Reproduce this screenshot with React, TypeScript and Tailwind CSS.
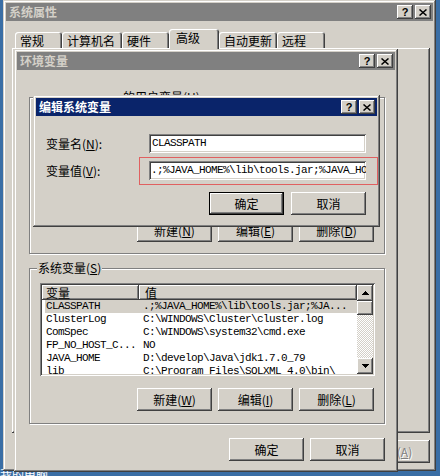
import React from 'react';

// classic 3D bevels
const RAISED_WIN =
  'shadow-[inset_-1px_-1px_#404040,inset_1px_1px_#d4d0c8,inset_-2px_-2px_#808080,inset_2px_2px_#ffffff]';
const RAISED =
  'shadow-[inset_-1px_-1px_#404040,inset_1px_1px_#ffffff,inset_-2px_-2px_#808080,inset_2px_2px_#d4d0c8]';
const SUNKEN =
  'shadow-[inset_1px_1px_#808080,inset_-1px_-1px_#ffffff,inset_2px_2px_#404040,inset_-2px_-2px_#d4d0c8]';
const HEADER = 'shadow-[inset_-1px_-1px_#404040,inset_1px_1px_#ffffff,inset_-2px_-2px_#808080]';
const MONO = "font-['Liberation_Mono','Noto_Sans_CJK_SC',monospace] text-[11px] tracking-[-0.6px]";

const M = ({ k }: { k: string }) => (
  <>
    (<span className="underline underline-offset-1">{k}</span>)
  </>
);

const CapBtn = ({ children }: { children: React.ReactNode }) => (
  <div className={`flex h-[14px] w-[16px] items-center justify-center bg-[#d4d0c8] ${RAISED}`}>{children}</div>
);

const TitleBar = ({ title, active }: { title: string; active?: boolean }) => (
  <div
    className={`flex h-[18px] shrink-0 items-center justify-between pl-[3px] pr-[2px] ${
      active ? 'bg-[#0a246a] text-white' : 'bg-[#808080] text-[#d4d0c8]'
    }`}
  >
    <span className="text-[12px] font-bold leading-none">{title}</span>
    <div className="flex gap-[2px]">
      <CapBtn>
        <span className="font-['Liberation_Sans',sans-serif] text-[11px] font-bold leading-none text-black">?</span>
      </CapBtn>
      <CapBtn>
        <svg width="8" height="7" viewBox="0 0 8 7">
          <path d="M0.5 0.5 L7.5 6.5 M7.5 0.5 L0.5 6.5" stroke="#000" strokeWidth="1.5" />
        </svg>
      </CapBtn>
    </div>
  </div>
);

const Btn = ({
  children,
  def,
  disabled,
}: {
  children: React.ReactNode;
  def?: boolean;
  disabled?: boolean;
}) => (
  <div
    className={`flex h-[23px] w-[75px] shrink-0 items-center justify-center bg-[#d4d0c8] text-[12px] leading-none ${
      def ? `border border-black ${RAISED}` : RAISED
    } ${disabled ? 'text-[#808080] [text-shadow:1px_1px_0_#ffffff]' : 'text-black'}`}
  >
    {children}
  </div>
);

const GroupBox = ({
  label,
  labelLeft,
  className = '',
  children,
}: {
  label: React.ReactNode;
  labelLeft: string;
  className?: string;
  children: React.ReactNode;
}) => (
  <div className={`relative border border-[#808080] shadow-[inset_1px_1px_#ffffff,1px_1px_#ffffff] ${className}`}>
    <span className={`absolute -top-[9px] ${labelLeft} bg-[#d4d0c8] px-[1px] text-[12px] leading-[16px]`}>{label}</span>
    {children}
  </div>
);

const rows = [
  ['CLASSPATH', '.;%JAVA_HOME%\\lib\\tools.jar;%JA...'],
  ['ClusterLog', 'C:\\WINDOWS\\Cluster\\cluster.log'],
  ['ComSpec', 'C:\\WINDOWS\\system32\\cmd.exe'],
  ['FP_NO_HOST_C...', 'NO'],
  ['JAVA_HOME', 'D:\\develop\\Java\\jdk1.7.0_79'],
  ['lib', 'C:\\Program Files\\SQLXML 4.0\\bin\\'],
];

const ListView = () => (
  <div className={`flex h-[93px] bg-white p-[2px] ${SUNKEN}`}>
    <div className="flex min-w-0 flex-1 flex-col overflow-hidden">
      <div className="flex h-[15px] shrink-0 bg-[#d4d0c8] text-[12px] leading-[15px]">
        <div className={`w-[97px] pl-[4px] ${HEADER}`}>变量</div>
        <div className={`flex-1 pl-[6px] ${HEADER}`}>值</div>
      </div>
      {rows.map(([name, value], i) => (
        <div
          key={name}
          className={`ml-[3px] flex h-[13px] shrink-0 whitespace-pre leading-[13px] text-black ${MONO} ${
            i === 0 ? 'bg-[#d4d0c8]' : ''
          }`}
        >
          <span className="w-[98px] shrink-0 pl-[1px]">{name}</span>
          <span>{value}</span>
        </div>
      ))}
    </div>
    <div className="flex w-[16px] shrink-0 flex-col">
      <div className={`flex h-[16px] items-center justify-center bg-[#d4d0c8] ${RAISED}`}>
        <svg width="7" height="4" viewBox="0 0 7 4">
          <path d="M3 0h1v1h1v1h1v1h1v1H0V3h1V2h1V1h1z" fill="#000" />
        </svg>
      </div>
      <div className={`h-[14px] bg-[#d4d0c8] ${RAISED}`} />
      <div className="flex-1 bg-[repeating-conic-gradient(#d4d0c8_0_25%,#ffffff_0_50%)] bg-[length:2px_2px]" />
      <div className={`flex h-[16px] items-center justify-center bg-[#d4d0c8] ${RAISED}`}>
        <svg width="7" height="4" viewBox="0 0 7 4">
          <path d="M0 0h7v1H6v1H5v1H4v1H3V3H2V2H1V1H0z" fill="#000" />
        </svg>
      </div>
    </div>
  </div>
);

const tabs: [string, number][] = [
  ['常规', 47],
  ['计算机名', 60],
  ['硬件', 47],
  ['高级', 50],
  ['自动更新', 58],
  ['远程', 48],
];

export default function App() {
  return (
    <div className="relative h-[476px] w-[440px] overflow-hidden bg-[#3a6ea5] font-['Noto_Sans_CJK_SC','Noto_Sans',sans-serif] text-black">
      <span className="absolute left-0 top-[467px] text-[12px] leading-[14px] text-white">我的电脑</span>

      {/* 系统属性 */}
      <div className={`absolute left-[3px] top-0 flex h-[471px] w-[433px] flex-col bg-[#d4d0c8] p-[3px] ${RAISED_WIN}`}>
        <TitleBar title="系统属性" />
        <div className="mt-[7px] flex h-[20px] shrink-0 items-end pl-[9px]">
          {tabs.map(([t, w], i) => (
            <div
              key={t}
              style={{ width: w }}
              className={`flex shrink-0 items-center rounded-t-[3px] bg-[#d4d0c8] pl-[5px] text-[12px] leading-[14px] shadow-[inset_1px_1px_#ffffff,inset_-1px_0_#404040,inset_-2px_0_#808080] ${
                i === 3 ? 'relative z-10 -mb-[1px] h-[20px] pb-[3px] pl-[7px]' : 'h-[16px] pt-[1px]'
              }`}
            >
              {t}
            </div>
          ))}
        </div>
        <div className={`ml-[6px] mr-[3px] h-[385px] shrink-0 ${RAISED}`} />
        <div className="mt-[7px] flex justify-end gap-[6px] pr-[3px]">
          <Btn>确定</Btn>
          <Btn>取消</Btn>
          <Btn disabled>
            应用<M k="A" />
          </Btn>
        </div>
      </div>

      {/* 环境变量 */}
      <div className={`absolute left-[14px] top-[49px] flex h-[423px] w-[384px] flex-col bg-[#d4d0c8] p-[3px] ${RAISED_WIN}`}>
        <TitleBar title="环境变量" />
        <div className="flex flex-col pl-[12px] pr-[10px]">
          <GroupBox label={<>的用户变量<M k="U" /></>} labelLeft="left-[92px]" className="mt-[27px] h-[157px]">
            <div className="flex h-full flex-col justify-end pb-[11px] pr-[10px]">
              <div className="flex justify-end gap-[6px]">
                <Btn>新建<M k="N" /></Btn>
                <Btn>编辑<M k="E" /></Btn>
                <Btn>删除<M k="D" /></Btn>
              </div>
            </div>
          </GroupBox>
          <GroupBox label={<>系统变量<M k="S" /></>} labelLeft="left-[7px]" className="mt-[14px] h-[156px]">
            <div className="flex flex-col pl-[10px] pr-[9px] pt-[14px]">
              <ListView />
              <div className="mt-[12px] flex justify-end gap-[6px] pr-[1px]">
                <Btn>新建<M k="W" /></Btn>
                <Btn>编辑<M k="I" /></Btn>
                <Btn>删除<M k="L" /></Btn>
              </div>
            </div>
          </GroupBox>
          <div className="mt-[14px] flex justify-end gap-[6px]">
            <Btn>确定</Btn>
            <Btn>取消</Btn>
          </div>
        </div>
      </div>

      {/* 编辑系统变量 */}
      <div className={`absolute left-[33px] top-[95px] flex h-[132px] w-[347px] flex-col bg-[#d4d0c8] p-[3px] ${RAISED_WIN}`}>
        <TitleBar title="编辑系统变量" active />
        <div className="flex flex-col pl-[10px] pr-[10px]">
          <div className="mt-[18px] flex items-center">
            <span className="w-[103px] shrink-0 text-[12px] leading-[14px]">
              变量名<M k="N" />:
            </span>
            <div className={`flex h-[19px] w-[217px] items-center overflow-hidden whitespace-pre bg-white pl-[3px] ${SUNKEN} ${MONO}`}>
              CLASSPATH
            </div>
          </div>
          <div className="mt-[8px] flex items-center">
            <span className="w-[103px] shrink-0 text-[12px] leading-[14px]">
              变量值<M k="V" />:
            </span>
            <div className={`flex h-[19px] w-[217px] items-center overflow-hidden whitespace-pre bg-white pl-[2px] ${SUNKEN} ${MONO}`}>
              .;%JAVA_HOME%\lib\tools.jar;%JAVA_HOME%\lib\dt.jar
            </div>
          </div>
          <div className="mt-[12px] flex justify-end gap-[7px] pr-[1px]">
            <Btn def>确定</Btn>
            <Btn>取消</Btn>
          </div>
        </div>
      </div>

      {/* red highlight */}
      <div className="absolute left-[139px] top-[157px] h-[28px] w-[239px] border border-[#e06060]" />
    </div>
  );
}
